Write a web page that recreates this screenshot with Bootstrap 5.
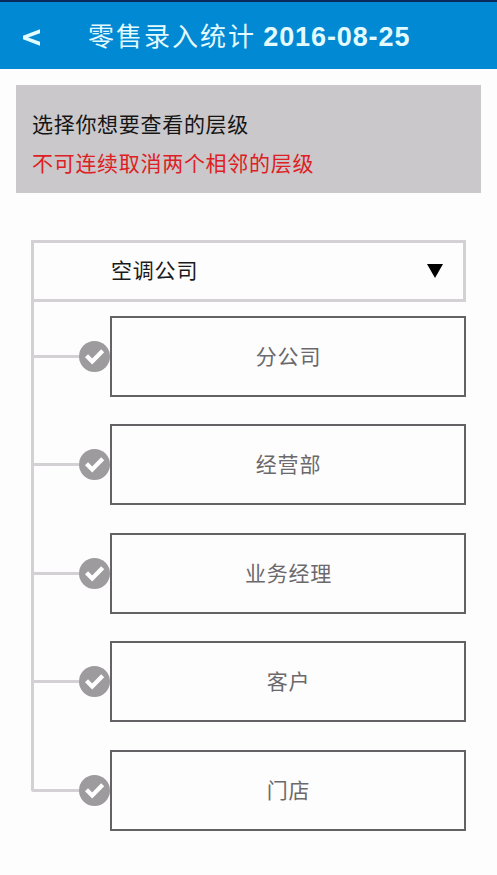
<!DOCTYPE html>
<html lang="zh-CN">
<head>
<meta charset="utf-8">
<meta name="viewport" content="width=device-width, initial-scale=1">
<title>零售录入统计</title>
<link href="https://cdn.jsdelivr.net/npm/bootstrap@5.3.0/dist/css/bootstrap.min.css" rel="stylesheet">
<style>
body{font-family:"Liberation Sans","Noto Sans CJK SC",sans-serif;background:#fefdfe;overflow:hidden;height:875px}
.topbar{height:69px;background:#0289d3;border-top:2px solid #0b2a5c;color:#e2fbff;padding:0 0 0 22px}
.back{width:66px;height:24px;margin-top:3px}
.heading{font-size:26px;line-height:40px;letter-spacing:2px;padding-top:2px}
.heading b{font-size:27px;letter-spacing:.9px;margin-left:-2px}
.notice{margin:16px 16px 0;height:108px;background:#cac8ca;padding:20px 16px 0;font-size:21px;line-height:39px;letter-spacing:.7px;color:#151515}
.notice .warn{color:#de2024}
.tree{width:435px;margin:47px 0 0 31px;font-size:21px;letter-spacing:.8px}
.company{height:62px;border:3px solid #d3d1d4;padding:0 20px 1px 77px;color:#1a1a1a}
.level{height:108.5px}
.level:first-child{height:94.8px}
.stem{width:48px}
.stem-up{flex:1;border:solid #d3d1d4;border-width:0 0 3px 3px}
.stem-down{height:39px;border-left:3px solid #d3d1d4}
.level:last-child .stem-down{border-color:transparent}
.level:last-child .stem-up{border-bottom-left-radius:3px}
.tick{width:31px;height:31px;margin-bottom:25px}
.level-box{height:81px;border:2px solid #646265;color:#6b696b;padding-left:1px}
</style>
</head>
<body>
<nav class="topbar d-flex align-items-center">
  <svg class="back" viewBox="0 0 66 24" fill="#e2fbff"><path d="M18 4.2v4.1L6.2 12.5 18 16.7v4.1L1 14.2v-3.4z"/></svg>
  <div class="heading text-nowrap">零售录入统计 <b>2016-08-25</b></div>
</nav>
<section class="notice">
  <div>选择你想要查看的层级</div>
  <div class="warn">不可连续取消两个相邻的层级</div>
</section>
<main class="tree">
  <div class="company d-flex align-items-center justify-content-between">
    <span>空调公司</span>
    <svg width="16" height="14" viewBox="0 0 16 14"><path d="M0 0h16L8 14z" fill="#000"/></svg>
  </div>
  <div>
    <div class="level d-flex align-items-end">
      <div class="stem d-flex flex-column align-self-stretch"><div class="stem-up"></div><div class="stem-down"></div></div>
      <svg class="tick" viewBox="0 0 31 31"><circle cx="15.5" cy="15.5" r="15.5" fill="#9d9b9d"/><path d="M7.5 14.8 13.2 20.5 23.7 9.8" fill="none" stroke="#fff" stroke-width="4.3"/></svg>
      <div class="level-box flex-fill d-flex align-items-center justify-content-center">分公司</div>
    </div>
    <div class="level d-flex align-items-end">
      <div class="stem d-flex flex-column align-self-stretch"><div class="stem-up"></div><div class="stem-down"></div></div>
      <svg class="tick" viewBox="0 0 31 31"><circle cx="15.5" cy="15.5" r="15.5" fill="#9d9b9d"/><path d="M7.5 14.8 13.2 20.5 23.7 9.8" fill="none" stroke="#fff" stroke-width="4.3"/></svg>
      <div class="level-box flex-fill d-flex align-items-center justify-content-center">经营部</div>
    </div>
    <div class="level d-flex align-items-end">
      <div class="stem d-flex flex-column align-self-stretch"><div class="stem-up"></div><div class="stem-down"></div></div>
      <svg class="tick" viewBox="0 0 31 31"><circle cx="15.5" cy="15.5" r="15.5" fill="#9d9b9d"/><path d="M7.5 14.8 13.2 20.5 23.7 9.8" fill="none" stroke="#fff" stroke-width="4.3"/></svg>
      <div class="level-box flex-fill d-flex align-items-center justify-content-center">业务经理</div>
    </div>
    <div class="level d-flex align-items-end">
      <div class="stem d-flex flex-column align-self-stretch"><div class="stem-up"></div><div class="stem-down"></div></div>
      <svg class="tick" viewBox="0 0 31 31"><circle cx="15.5" cy="15.5" r="15.5" fill="#9d9b9d"/><path d="M7.5 14.8 13.2 20.5 23.7 9.8" fill="none" stroke="#fff" stroke-width="4.3"/></svg>
      <div class="level-box flex-fill d-flex align-items-center justify-content-center">客户</div>
    </div>
    <div class="level d-flex align-items-end">
      <div class="stem d-flex flex-column align-self-stretch"><div class="stem-up"></div><div class="stem-down"></div></div>
      <svg class="tick" viewBox="0 0 31 31"><circle cx="15.5" cy="15.5" r="15.5" fill="#9d9b9d"/><path d="M7.5 14.8 13.2 20.5 23.7 9.8" fill="none" stroke="#fff" stroke-width="4.3"/></svg>
      <div class="level-box flex-fill d-flex align-items-center justify-content-center">门店</div>
    </div>
  </div>
</main>
<script src="https://cdn.jsdelivr.net/npm/bootstrap@5.3.0/dist/js/bootstrap.bundle.min.js"></script>
</body>
</html>
